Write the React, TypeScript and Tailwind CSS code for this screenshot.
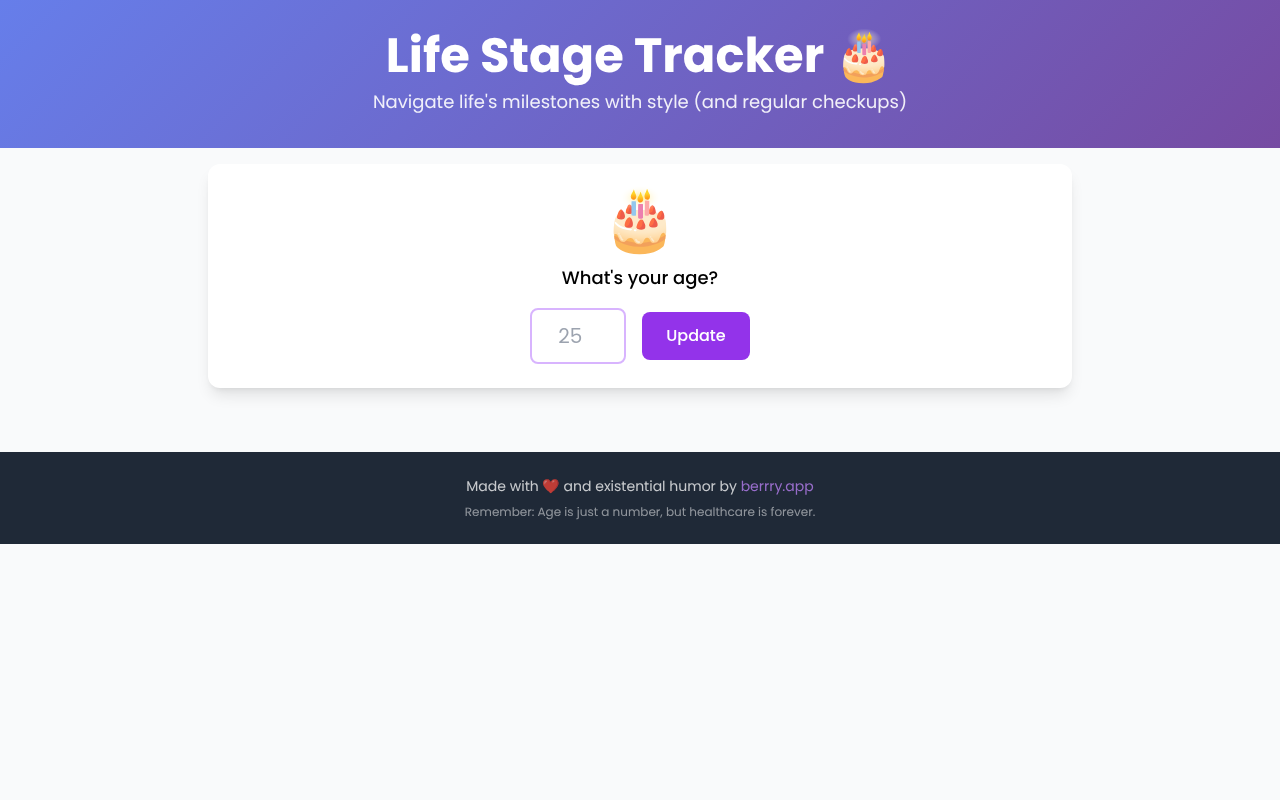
export default function App() {
  return (
    <div className="min-h-screen bg-[#f9fafb] [text-rendering:geometricPrecision] will-change-transform font-['Poppins','Inter','Noto_Sans',sans-serif]">
      <header className="text-white text-center pt-8 pb-[30px] bg-[linear-gradient(135deg,#667eea_0%,#764ba2_100%)]">
        <h1 className="text-5xl font-bold leading-none mb-2">Life Stage Tracker 🎂</h1>
        <p className="text-lg leading-[30px] opacity-90">Navigate life's milestones with style (and regular checkups)</p>
      </header>

      <main className="flex flex-col items-center pt-4 pb-16">
        <div className="w-[864px] bg-white rounded-xl shadow-lg text-center p-6">
          <div className="text-6xl leading-none mb-4">
            <span className="inline-block scale-[1.02] translate-y-px">🎂</span>
          </div>
          <h2 className="text-lg leading-[30px] font-medium text-black mb-[14px]">What's your age?</h2>
          <div className="flex items-center justify-center gap-4">
            <input
              type="number"
              placeholder="25"
              className="w-24 h-14 border-2 border-[#d8b4fe] rounded-lg pl-[15px] pr-4 text-xl text-center outline-none placeholder:text-[#9ca3af]"
            />
            <button className="px-6 py-3 rounded-lg bg-[#9333ea] text-white font-medium">Update</button>
          </div>
        </div>
      </main>

      <footer className="bg-[#1f2937] text-white text-center pt-6 pb-[22px]">
        <p className="text-sm opacity-75 mb-2">
          Made with ❤️ and existential humor by <a className="text-[#c084fc]">berrry.app</a>
        </p>
        <p className="text-xs leading-[18px] opacity-50">Remember: Age is just a number, but healthcare is forever.</p>
      </footer>
    </div>
  );
}
